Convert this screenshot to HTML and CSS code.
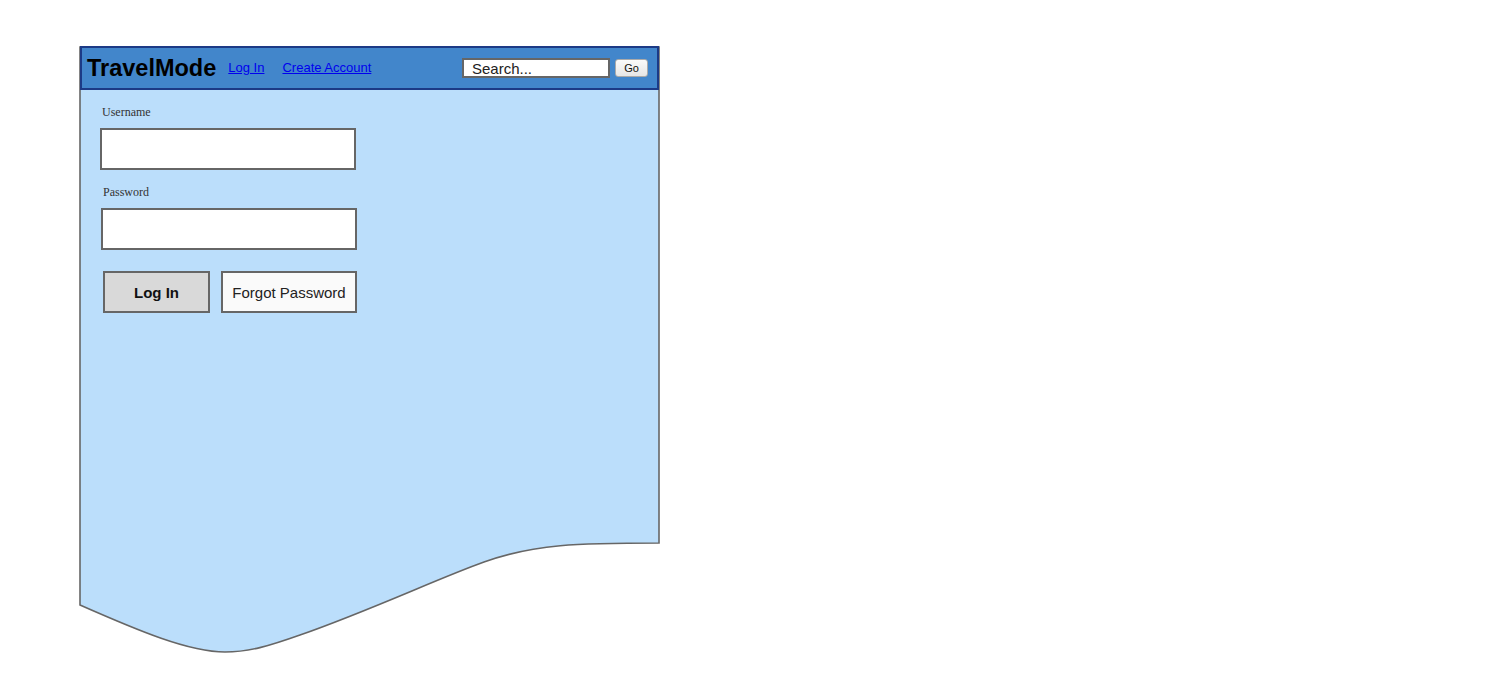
FILE: index.html
```html
<!DOCTYPE html>
<html>
<head>
<meta charset="utf-8">
<link rel="stylesheet" href="styles.css">
</head>
<body>
<div class="canvas">
  <svg class="doc-shape" width="584" height="612" viewBox="0 0 584 612">
    <path d="M1,1 H580 V497 C500,497 455,498 405,516 C360,532 290,565 221,589 C190,600 170,606 146,606 C110,606 60,585 1,559 Z" fill="#bbdefb" stroke="#666666" stroke-width="1.6"/>
  </svg>
  <div class="content">
    <header class="topbar">
      <div class="brand">TravelMode</div>
      <nav class="nav">
        <a href="#" class="nav-link">Log In</a>
        <a href="#" class="nav-link">Create Account</a>
      </nav>
      <div class="search">
        <div class="search-box">Search...</div>
        <button class="go-btn">Go</button>
      </div>
    </header>
    <main class="form">
      <label class="lbl lbl-user">Username</label>
      <div class="field field-user"></div>
      <label class="lbl lbl-pass">Password</label>
      <div class="field field-pass"></div>
      <div class="actions">
        <button class="btn btn-primary">Log In</button>
        <button class="btn btn-secondary">Forgot Password</button>
      </div>
    </main>
  </div>
</div>
</body>
</html>
```
FILE: styles.css
```css
html, body {
  margin: 0;
  padding: 0;
  background: #ffffff;
}
.canvas {
  position: relative;
  margin: 46px 0 0 79px;
  width: 584px;
  height: 612px;
}
.doc-shape {
  position: absolute;
  left: 0;
  top: 0;
}
.content {
  position: relative;
  display: flex;
  flex-direction: column;
}
.topbar {
  margin-left: 1px;
  width: 579px;
  height: 44px;
  box-sizing: border-box;
  border: 2px solid #1c3a86;
  background: #4286cb;
  display: flex;
  align-items: center;
  padding: 0 9px 0 5px;
  font-family: "Liberation Sans", Arial, sans-serif;
}
.brand {
  font-size: 23.5px;
  font-weight: bold;
  color: #000;
  margin-top: 1px;
}
.nav {
  display: flex;
  gap: 18px;
  margin-left: 12px;
  margin-top: -2px;
}
.nav-link {
  font-size: 13px;
  color: #0000ee;
  text-decoration: underline;
}
.search {
  margin-left: auto;
  display: flex;
  align-items: center;
  gap: 5px;
}
.search-box {
  width: 148px;
  height: 20px;
  box-sizing: border-box;
  border: 2px solid #666;
  background: #fff;
  font-size: 15px;
  line-height: 17px;
  color: #222;
  padding-left: 8px;
}
.go-btn {
  width: 33px;
  height: 18px;
  box-sizing: border-box;
  border: 1px solid #aaa;
  border-radius: 3px;
  background: linear-gradient(#fafafa, #e6e6e6);
  font-family: "Liberation Sans", Arial, sans-serif;
  font-size: 11px;
  color: #111;
  padding: 0;
}
.form {
  display: flex;
  flex-direction: column;
  align-items: flex-start;
  padding-left: 21px;
}
.lbl {
  font-family: "Liberation Serif", "Times New Roman", serif;
  font-size: 12px;
  color: #333;
  line-height: 14px;
}
.lbl-user {
  margin-top: 15px;
  margin-left: 2px;
}
.lbl-pass {
  margin-top: 15px;
  margin-left: 3px;
}
.field {
  width: 256px;
  height: 42px;
  box-sizing: border-box;
  border: 2px solid #666;
  background: #fff;
}
.field-user {
  margin-top: 9px;
}
.field-pass {
  margin-top: 9px;
  margin-left: 1px;
}
.actions {
  display: flex;
  gap: 11px;
  margin-top: 21px;
  margin-left: 3px;
}
.btn {
  height: 42px;
  box-sizing: border-box;
  border: 2px solid #666;
  font-family: "Liberation Sans", Arial, sans-serif;
  font-size: 15px;
  color: #111;
  padding: 0;
}
.btn-primary {
  width: 107px;
  background: #d9d9d9;
  font-weight: bold;
}
.btn-secondary {
  width: 136px;
  background: #fafafa;
  color: #222;
}
```
